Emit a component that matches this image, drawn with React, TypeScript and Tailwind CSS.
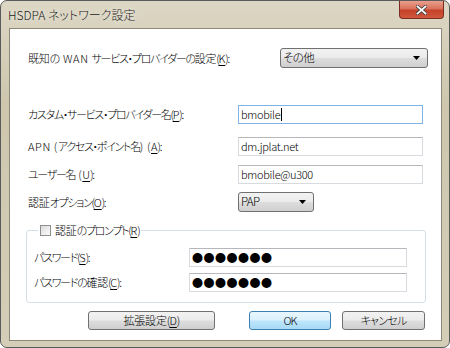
import React from "react";

const font = "[font-family:'Noto_Sans_CJK_JP','Noto_Sans',sans-serif] [font-feature-settings:'palt']";

const Arrow = () => (
    <svg width="7" height="4" viewBox="0 0 7 4" className="shrink-0">
        <path d="M0 0h7L3.5 4z" fill="#000" />
    </svg>
);

const Combo = ({ value, width }: { value: string; width: string }) => (
    <div
        className={`${width} h-[20px] flex items-center justify-between pl-[2px] pr-[7px] rounded-[3px] border border-[#707070] bg-[linear-gradient(#f2f2f2_0%,#ebebeb_48%,#dddddd_52%,#cfcfcf_100%)] text-[11.5px] tracking-[-0.6px] text-black`}
    >
        <span>{value}</span>
        <Arrow />
    </div>
);

const TextBox = ({ value, focused, caret }: { value: string; focused?: boolean; caret?: boolean }) => (
    <div
        className={`w-[185px] h-[19px] flex items-center px-[2px] border ${
            focused ? "border-[#7eb4ea]" : "border-[#d7dbe0] border-t-[#b5b7bd]"
        } bg-white text-[11px] tracking-[-0.3px] text-black`}
    >
        <span>{value}</span>
        {caret && <span className="ml-px w-px h-[13px] bg-black" />}
    </div>
);

const Button = ({ label, width, primary }: { label: React.ReactNode; width: string; primary?: boolean }) => (
    <div
        className={`${width} h-[19px] flex items-center justify-center rounded-[3px] border ${
            primary
                ? "border-[#3c7fb1] bg-[linear-gradient(#eaf6fd_0%,#d9f0fc_48%,#bee6fd_52%,#a7d9f5_100%)]"
                : "border-[#707070] bg-[linear-gradient(#f2f2f2_0%,#ebebeb_48%,#dddddd_52%,#cfcfcf_100%)]"
        } text-[11px] tracking-[-0.8px] text-black`}
    >
        {label}
    </div>
);

// underlined access key
const U = ({ c }: { c: string }) => <span className="underline underline-offset-2 tracking-normal">{c}</span>;
// latin runs keep normal spacing
const L = ({ t }: { t: string }) => <span className="tracking-[0.6px] whitespace-pre">{t}</span>;
// kanji runs are wider than the squeezed kana
const J = ({ t }: { t: string }) => <span className="tracking-[-0.2px]">{t}</span>;

const Dots = () => (
    <div className="w-[218px] h-[19px] flex items-center px-[2px] border border-[#d7dbe0] border-t-[#b5b7bd] bg-white text-[11px] leading-none text-black tracking-[0.5px]">
        ●●●●●●●
    </div>
);

export default function App() {
    return (
        <div className={`${font} font-light w-[450px] h-[348px] bg-white`}>
            <div className="w-[450px] h-[348px] flex flex-col rounded-[7px] border border-[#5a5a5a] bg-[linear-gradient(180deg,#dcd6c4_0%,#cec7ae_30%,#d4ceb8_100%)]">
                {/* title bar */}
                <div className="h-[27px] flex items-start justify-between">
                    <span className="pl-[7px] pt-[6px] text-[12px] leading-[15px] text-[#1b1b1b] [text-shadow:0_0_6px_#ffffff]">
                        HSDPA ネットワーク設定
                    </span>
                    <div className="mr-[5px] w-[45px] h-[18px] flex items-center justify-center rounded-b-[4px] border border-t-0 border-[#7a2d20] bg-[linear-gradient(#e9a08e_0%,#d9715b_45%,#c5412a_55%,#d0573c_100%)]">
                        <svg width="11" height="10" viewBox="0 0 11 10">
                            <path d="M1.5 1.5l8 7M9.5 1.5l-8 7" stroke="#3a3a3a" strokeWidth="3.4" strokeLinecap="square" />
                            <path d="M1.5 1.5l8 7M9.5 1.5l-8 7" stroke="#ffffff" strokeWidth="1.8" strokeLinecap="square" />
                        </svg>
                    </div>
                </div>

                {/* client area */}
                <div className="flex-1 ml-[8px] mr-[7px] mb-[6px] border border-[#8d8878] bg-white pt-[19px] pl-[18px] text-[11px] tracking-[-1.3px] text-black">
                    <div className="flex items-center h-[20px]">
                        <span className="w-[252px]">
                            <J t="既知の" />
                            <L t=" WAN " />サービス・プロバイダーの<J t="設定" />(<U c="K" />):
                        </span>
                        <Combo value="その他" width="w-[148px]" />
                    </div>

                    <div className="flex items-center h-[19px] mt-[37px]">
                        <span className="w-[210px]">
                            カスタム・サービス・プロバイダー名(<U c="P" />):
                        </span>
                        <TextBox value="bmobile" focused caret />
                    </div>

                    <div className="flex items-center h-[19px] mt-[13px]">
                        <span className="w-[210px]">
                            <L t="APN (" />アクセス・ポイント名<L t=") (" />
                            <U c="A" />):
                        </span>
                        <TextBox value="dm.jplat.net" />
                    </div>

                    <div className="flex items-center h-[19px] mt-[9px]">
                        <span className="w-[210px]">
                            ユーザー名<L t=" (" />
                            <U c="U" />):
                        </span>
                        <TextBox value="bmobile@u300" />
                    </div>

                    <div className="flex items-center h-[20px] mt-[8px]">
                        <span className="w-[210px]">
                            <J t="認証" />オプション(<U c="O" />):
                        </span>
                        <Combo value="PAP" width="w-[76px]" />
                    </div>

                    <fieldset className="mt-[11px] -ml-[2px] w-[400px] h-[80px] rounded-[3px] border border-[#d5dfe5] pl-[7px]">
                        <legend className="ml-[4px] px-[2px] flex items-center gap-[4px] h-[14px]">
                            <span className="w-[11px] h-[11px] border border-[#8e8f8f] bg-[linear-gradient(135deg,#dcdcdc,#fbfbfb)]" />
                            <span>
                                <J t="認証" />のプロンプト(<U c="R" />)
                            </span>
                        </legend>
                        <div className="flex items-center h-[19px] mt-[11px]">
                            <span className="w-[155px]">
                                パスワード(<U c="S" />):
                            </span>
                            <Dots />
                        </div>
                        <div className="flex items-center h-[19px] mt-[6px]">
                            <span className="w-[155px]">
                                パスワードの<J t="確認" />(<U c="C" />):
                            </span>
                            <Dots />
                        </div>
                    </fieldset>

                    <div className="flex mt-[8px] pl-[60px]">
                        <Button
                            width="w-[127px]"
                            label={
                                <span>
                                    <J t="拡張設定" />(<U c="D" />)
                                </span>
                            }
                        />
                        <div className="ml-[34px]">
                            <Button width="w-[82px]" label="OK" primary />
                        </div>
                        <div className="ml-[11px]">
                            <Button width="w-[83px]" label="キャンセル" />
                        </div>
                    </div>
                </div>
            </div>
        </div>
    );
}
